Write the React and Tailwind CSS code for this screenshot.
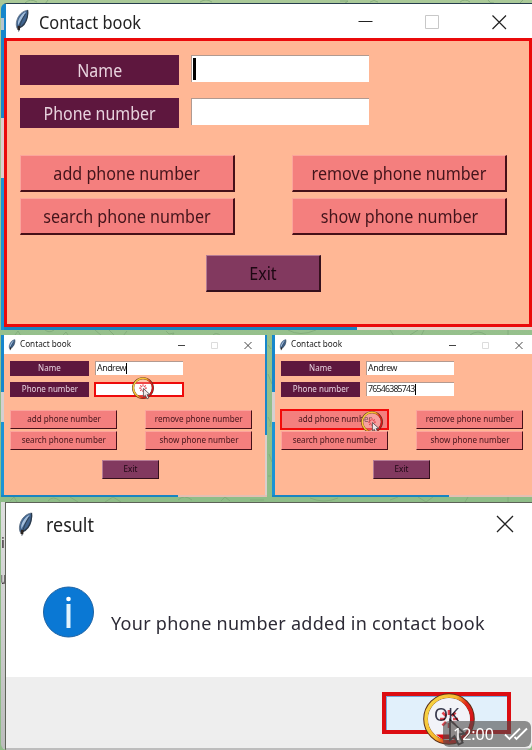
import React from "react";
import { clsx } from "clsx";

function Feather({ className }) {
  return (
    <svg viewBox="0 0 16 24" className={className} fill="none">
      <path d="M13.600 1.200C8.500 2 4.500 6 3 11 2 14 2 17 3.200 19.500 8.500 18.500 12 13.500 13.200 8.500 13.800 6 14.200 3.500 13.600 1.200Z" fill="#40648f" />
      <path d="M12.200 2.600C8 4.500 5 9 4 13L4 16.500C6.500 12 9.500 7 12.200 2.600Z" fill="#a3bedb" />
      <path d="M13.600 1.200C8.500 2 4.500 6 3 11 2 14 2 17 3.200 19.500" stroke="#66788c" strokeWidth="0.900" />
      <path d="M13.600 1.200C14.200 3.500 13.800 6 13.200 8.500 12 13.500 8.500 17.500 5 19" stroke="#2a3a4c" strokeWidth="1.300" />
      <path d="M11.500 5C8.500 9.500 6 14 4.600 22.500" stroke="#2e3e50" strokeWidth="0.900" />
      <path d="M5 17 4.600 21" stroke="#2b2421" strokeWidth="2.600" />
    </svg>
  );
}

function ClickRing({ id, className, children }) {
  return (
    <svg viewBox="0 0 52 54" className={clsx("absolute overflow-visible", className)} fill="none">
      <defs>
        <linearGradient id={id} x1="0" y1="0.1" x2="1" y2="0.6">
          <stop offset="0" stopColor="#f8d848" />
          <stop offset="0.5" stopColor="#f6b72c" />
          <stop offset="0.72" stopColor="#e2261a" />
          <stop offset="1" stopColor="#d3121a" />
        </linearGradient>
      </defs>
      <circle cx="26" cy="26" r="22" fill="#fff" fillOpacity="0.25" />
      <circle cx="26" cy="26" r="23.300" stroke="#5c3018" strokeWidth="5" />
      <circle cx="26" cy="26" r="23" stroke={`url(#${id})`} strokeWidth="3.600" />
      {children}
      <g stroke="#e0454f" strokeWidth="2.600">
        <path d="M26 17v5M26 30v5M17 26h5M30 26h5M19.500 19.500l3.500 3.500M29 29l3.500 3.500M32.500 19.500 29 23M23 29l-3.500 3.500" />
      </g>
      <path d="M27 27v20l4.500-4 4 8.500 4.200-2-4-8.200 6-.6Z" fill="#f1e6e6" stroke="#4b4447" strokeWidth="1.800" />
    </svg>
  );
}

function Text({ children, className }) {
  return <span className={clsx("inline-block shrink-0 whitespace-nowrap", className)}>{children}</span>;
}

function Controls({ big, className }) {
  return (
    <svg
      viewBox={big ? "0 0 150 16" : "0 0 75 8"}
      className={clsx(big ? "h-4 w-[150px]" : "h-2 w-[75px]", className)}
      fill="none"
    >
      {big ? (
        <>
          <path d="M1.500 7.500h14" stroke="#222" strokeWidth="1.200" />
          <path d="M68.500 1.500h13v13h-13z" stroke="#c8c8c8" />
          <path d="m135.500 1.500 13.500 13.500M149 1.500 135.500 15" stroke="#222" strokeWidth="1.200" />
        </>
      ) : (
        <>
          <path d="M1 4.500h7" stroke="#444" />
          <path d="M34.500 1.500h6v6h-6z" stroke="#dcdcdc" />
          <path d="m67.500 1 7 7M74.500 1l-7 7" stroke="#333" strokeWidth="0.900" />
        </>
      )}
    </svg>
  );
}

function Label({ big, children }) {
  return (
    <div
      className={clsx(
        "flex shrink-0 items-center justify-center bg-[#5e173e] pt-px text-[#e8d3de]",
        big ? "h-[30px] w-[159px] text-[17.500px]" : "h-[15px] w-[79px] text-[8.800px]",
      )}
    >
      <Text className="scale-x-[0.91]">{children}</Text>
    </div>
  );
}

function Field({ big, caret, marked, value, children }) {
  return (
    <div
      className={clsx(
        "relative flex items-center bg-white text-[#222]",
        big ? "h-[27px] w-[178px] border-t border-l border-[#b09a91]" : "w-[88px] text-[8.800px]",
        !big && (marked ? "-ml-px h-[15px] w-[90px] border-2 border-[#ee0a0a]" : "h-[14px] border-t border-l border-[#b39a90] pl-px"),
      )}
    >
      {value && <Text className={value.length > 8 ? "tracking-[-0.8px]" : "tracking-[-0.450px]"}>{value}</Text>}
      {caret && <span className={big ? "ml-[1px] h-[22px] w-[3px] bg-black" : "h-[11px] w-px bg-black"} />}
      {children}
    </div>
  );
}

function Action({ big, exit, marked, children, overlay }) {
  return (
    <div
      className={clsx(
        "relative flex shrink-0 items-center justify-center",
        exit ? "bg-[#82395f] text-[#1c0712]" : "bg-[#f47f7e] text-[#43141b]",
        big ? "h-[37px] border-t border-r-2 border-b-2 border-l pt-px text-[17.500px]" : "h-[19px] border pt-px text-[8.800px]",
        big ? (exit ? "w-[115px]" : "w-[215px]") : exit ? "w-[57px]" : "w-[107px]",
        marked
          ? "outline outline-[#f20a0a] border-[#f20a0a]"
          : exit
            ? "border-t-[#b57a94] border-l-[#b57a94] border-r-[#35101c] border-b-[#35101c]"
            : "border-t-[#fba59c] border-l-[#fba59c] border-r-[#461018] border-b-[#461018]",
      )}
    >
      <Text className="scale-x-[0.92]">{children}</Text>
      {overlay}
    </div>
  );
}

function ContactForm({ big, name, phone, caretOn, markPhone, markAdd }) {
  const ring = (id, cls) => <ClickRing id={id} className={cls} />;
  return (
    <div className={clsx("flex flex-col", big ? "px-[13px] pt-[14px]" : "pt-[7px] pl-[6px]")}>
      <div className={clsx("flex", big ? "h-[43px] gap-3" : "h-[21px] gap-[6px]")}>
        <Label big={big}>Name</Label>
        <Field big={big} value={name} caret={caretOn === "name"} />
      </div>
      <div className={clsx("flex", big ? "h-[57px] gap-3" : "h-[28px] gap-[6px]")}>
        <Label big={big}>Phone number</Label>
        <Field big={big} value={phone} marked={markPhone} caret={caretOn === "phone"}>
          {markPhone && ring("ring-phone", "left-[36px] top-[-7px] h-[23px] w-[22px]")}
        </Field>
      </div>
      <div
        className={clsx(
          "grid",
          big ? "grid-cols-[215px_215px] gap-x-[57px] gap-y-[6px]" : "grid-cols-[107px_107px] gap-x-[28px] gap-y-[2px]",
        )}
      >
        <Action big={big} marked={markAdd} overlay={markAdd && ring("ring-add", "left-[79px] top-0 h-[23px] w-[22px]")}>
          add phone number
        </Action>
        <Action big={big}>remove phone number</Action>
        <Action big={big}>search phone number</Action>
        <Action big={big}>show phone number</Action>
      </div>
      <div className={big ? "mt-5 ml-[186px]" : "mt-[10px] ml-[92px]"}>
        <Action big={big} exit>
          Exit
        </Action>
      </div>
    </div>
  );
}

function SmallWindow({ children, controls }) {
  return (
    <div className="flex h-full min-w-0 flex-col">
      <div className="flex h-[19px] shrink-0 items-center bg-white">
        <Feather className="ml-[4px] h-3 w-2" />
        <Text className="ml-[4px] origin-left scale-x-[0.93] pt-px text-[8.800px] text-[#222]">Contact book</Text>
        <div className="ml-auto">
          <Controls className={controls} />
        </div>
      </div>
      <div className="h-[141px] shrink-0 bg-[#ffb795]">{children}</div>
    </div>
  );
}

function SideStrip({ className }) {
  return (
    <div className={clsx("flex shrink-0 flex-col", className)}>
      <div className="h-[57px] bg-[#1687cc]" />
      <div className="h-[30px] bg-[#d5cfd0]" />
      <div className="grow bg-[#1a94d5]" />
    </div>
  );
}

function Wallpaper() {
  return (
    <svg viewBox="0 0 532 750" className="absolute inset-0 h-full w-full" fill="none" stroke="#7fa878" strokeWidth="0.8">
      <path d="M25 3q5-5 12-1M48 0l-3 4M200 2q6-4 12 0M340 1h8l-4 3M370 2q4-3 8 0M460 2q5-4 10 0M488 0q2 4 6 3M520 3l4-4" />
      <path d="M15 335l3-4 3 5M44 329q5 5 10 1M63 335l3-3 2 3M95 330l7 6M108 329l7 7M127 331l-4 5M166 331l3 3 5-1-2 3M212 336q4-5 9 0M288 330q12 7 28 0M390 330l4 6M410 335l8-5M424 330l-3 6M470 335q8-6 16 0M508 330v6" />
      <path d="M10 501l4-4 3 5M48 501q5-6 12 0M70 497l8 5M105 502l8-5 8 5M178 500q6-6 14 0M221 501l4-4 5 4M250 500h14M310 498q14 6 28 0M390 500l8-3M418 497l8 5 7-5M468 497l-3 5M508 497v5" />
      <path d="M268 345l3 4M268 374l4 10M268 417q4 5 2 10M269 454l3 8M268 476h3" />
    </svg>
  );
}

export default function App() {
  return (
    <div className="relative h-[750px] w-[532px] overflow-hidden bg-linear-to-b from-[#aac998] to-[#8fbd88] to-60% font-['Noto_Sans','Open_Sans',sans-serif]">
      <Wallpaper />
      <div className="relative flex h-full flex-col gap-[5px] pt-[3px] pl-px">
        <section className="flex h-[327px] shrink-0 overflow-hidden rounded-tl-md">
          <div className="flex w-[3px] shrink-0 flex-col">
            <div className="h-[15px] bg-[#1687cc]" />
            <div className="h-[12px] bg-[#b8c5cc]" />
            <div className="h-[88px] bg-[#1687cc]" />
            <div className="h-[60px] bg-[#dcced0]" />
            <div className="grow bg-[#1a94d5]" />
          </div>
          <div className="flex grow flex-col border-t border-[#263d4d]">
            <div className="flex h-[34px] shrink-0 items-center border-l-2 border-[#1687cc] bg-white">
              <Feather className="ml-[8px] h-[24px] w-4" />
              <Text className="mt-[3px] ml-[9px] origin-left scale-x-[0.935] text-[17.500px] text-[#222]">Contact book</Text>
              <div className="ml-auto pt-0.5">
                <Controls big className="mr-[25px]" />
              </div>
            </div>
            <div className="h-[289px] shrink-0 border-[3px] border-[#ea0a0b] bg-[#ffb795]">
              <ContactForm big caretOn="name" />
            </div>
            <div className="flex grow">
              <div className="w-[353px] bg-[#1885c2]" />
              <div className="grow bg-[#ead2ca]" />
            </div>
          </div>
        </section>

        <section className="flex h-[162px] shrink-0 gap-[5px]">
          <div className="flex w-[266px] flex-col">
            <div className="flex h-[160px]">
              <SideStrip className="w-[3px]" />
              <div className="w-[261px]">
                <SmallWindow controls="mr-[13px]">
                  <ContactForm name="Andrew" caretOn="name" markPhone />
                </SmallWindow>
              </div>
              <div className="flex w-[2px] flex-col">
                <div className="h-[100px] bg-[#1687cc]" />
                <div className="grow bg-[#d8cfcc]" />
              </div>
            </div>
            <div className="flex h-[2px]">
              <div className="w-[177px] bg-[#1885c2]" />
              <div className="grow bg-[#e3bfb3]" />
            </div>
          </div>
          <div className="flex w-[260px] flex-col">
            <div className="flex h-[160px]">
              <SideStrip className="w-[3px]" />
              <div className="w-[257px]">
                <SmallWindow controls="mr-[9px]">
                  <ContactForm name="Andrew" phone="76546385743" caretOn="phone" markAdd />
                </SmallWindow>
              </div>
            </div>
            <div className="flex h-[2px]">
              <div className="w-[177px] bg-[#1885c2]" />
              <div className="grow bg-[#e3bfb3]" />
            </div>
          </div>
        </section>

        <section className="flex h-[248px] shrink-0 overflow-hidden rounded-b-md">
          <div className="flex w-[4px] shrink-0 flex-col overflow-hidden bg-linear-to-b from-[#dfdfdf] to-[#bcbcbc] leading-5 text-[#33282e]">
            <Text className="mt-[30px] w-[4px] text-[15px]">i</Text>
            <Text className="mt-[16px] w-[10px] origin-left scale-x-[0.4] text-[17px]">u</Text>
          </div>
          <div className="flex grow flex-col border-t border-l border-[#5d6258]">
            <div className="flex h-[42px] shrink-0 items-center bg-white">
              <Feather className="ml-[11px] h-[27px] w-[17px]" />
              <Text className="mt-[2px] ml-[12px] origin-left scale-x-[0.92] text-[19.500px] text-[#222]">result</Text>
              <svg viewBox="0 0 18 18" className="mr-[18px] ml-auto h-[18px] w-[18px]" stroke="#222" strokeWidth="1.300">
                <path d="m1 1 16 16M17 1 1 17" />
              </svg>
            </div>
            <div className="flex h-[132px] shrink-0 bg-white pt-[41px] pl-[37px]">
              <svg viewBox="0 0 52 52" className="h-[52px] w-[52px] shrink-0">
                <circle cx="25.500" cy="26" r="25" fill="#0a78d4" stroke="#1d62a3" />
                <circle cx="25.500" cy="13" r="2.300" fill="#fff" />
                <path d="M23.500 18h4v24h-4z" fill="#e3f4fd" />
              </svg>
              <Text className="mt-[25px] ml-[16px] text-[18px] leading-6 tracking-[0.280px] text-[#2d2b36]">
                Your phone number added in contact book
              </Text>
            </div>
            <div className="flex h-[71px] shrink-0 justify-end bg-[#eeeeee] pt-[15px] pr-[21px]">
              <div className="relative flex h-[42px] w-[129px] items-center justify-center border-4 border-[#dc0d12] bg-[#e1f0fb]">
                <div className="absolute inset-0 border-t border-l border-[#74a9dc]" />
                <ClickRing id="ring-ok" className="top-[-3px] left-[37px] h-[54px] w-[52px]">
                  <circle cx="26" cy="26" r="21" fill="#f2f3f8" />
                  <path d="M13 41.500h26l-6 4.500H19Z" fill="#dc0d12" />
                </ClickRing>
                <Text className="relative mt-[2px] text-[18px] text-[#3c3d50] mix-blend-multiply">OK</Text>
              </div>
              <div className="absolute right-px bottom-[3px] flex h-[26px] w-[88px] items-center rounded-md bg-[#4b4b4b]/60 pl-[10px] text-white">
                <Text className="text-[16px]">12:00</Text>
                <svg viewBox="0 0 24 14" className="ml-[10px] h-[14px] w-6" fill="none" stroke="#fff" strokeWidth="1.800">
                  <path d="m1 7.500 4.500 4.500L16 1.500M10.500 10l2 2L23 1.500" />
                </svg>
              </div>
            </div>
            <div className="grow bg-[#bdbdbd]" />
          </div>
        </section>
      </div>
    </div>
  );
}
